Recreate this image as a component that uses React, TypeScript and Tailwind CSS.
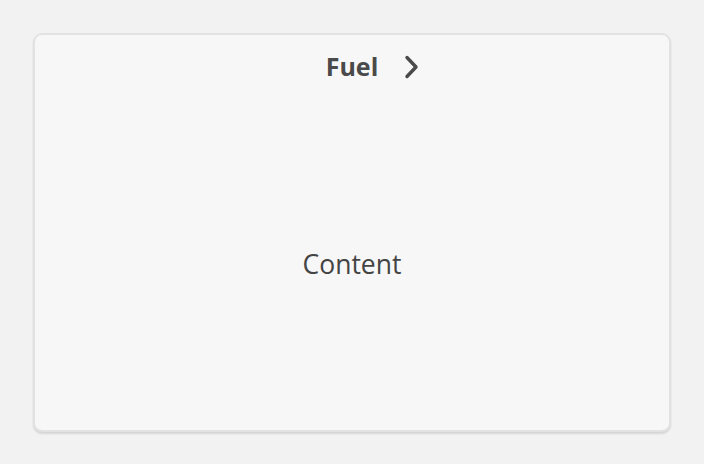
export default function App() {
  return (
    <div className="w-[704px] h-[464px] bg-[#f2f2f2] p-[33px] pb-[32px] font-['Open_Sans',sans-serif]">
      <div className="flex flex-col h-full bg-[#f7f7f7] rounded-[9px] border-2 border-[#e2e2e2] shadow-[0_2px_2px_rgba(0,0,0,0.12)]">
        <div className="flex items-center justify-center h-[64px]">
          <div className="relative">
            <span className="text-[25px] font-bold text-[#4a4a4a]">Fuel</span>
            <svg
              className="absolute left-[76px] top-1/2 -translate-y-1/2"
              width="20"
              height="26"
              viewBox="0 0 20 26"
              fill="none"
              stroke="#4a4a4a"
              strokeWidth="3.4"
              strokeLinecap="round"
              strokeLinejoin="round"
            >
              <path d="M5 3.5l9 9.5-9 9.5" />
            </svg>
          </div>
        </div>
        <div className="flex-1 flex items-center justify-center">
          <span className="text-[26.5px] text-[#444]">Content</span>
        </div>
      </div>
    </div>
  );
}
